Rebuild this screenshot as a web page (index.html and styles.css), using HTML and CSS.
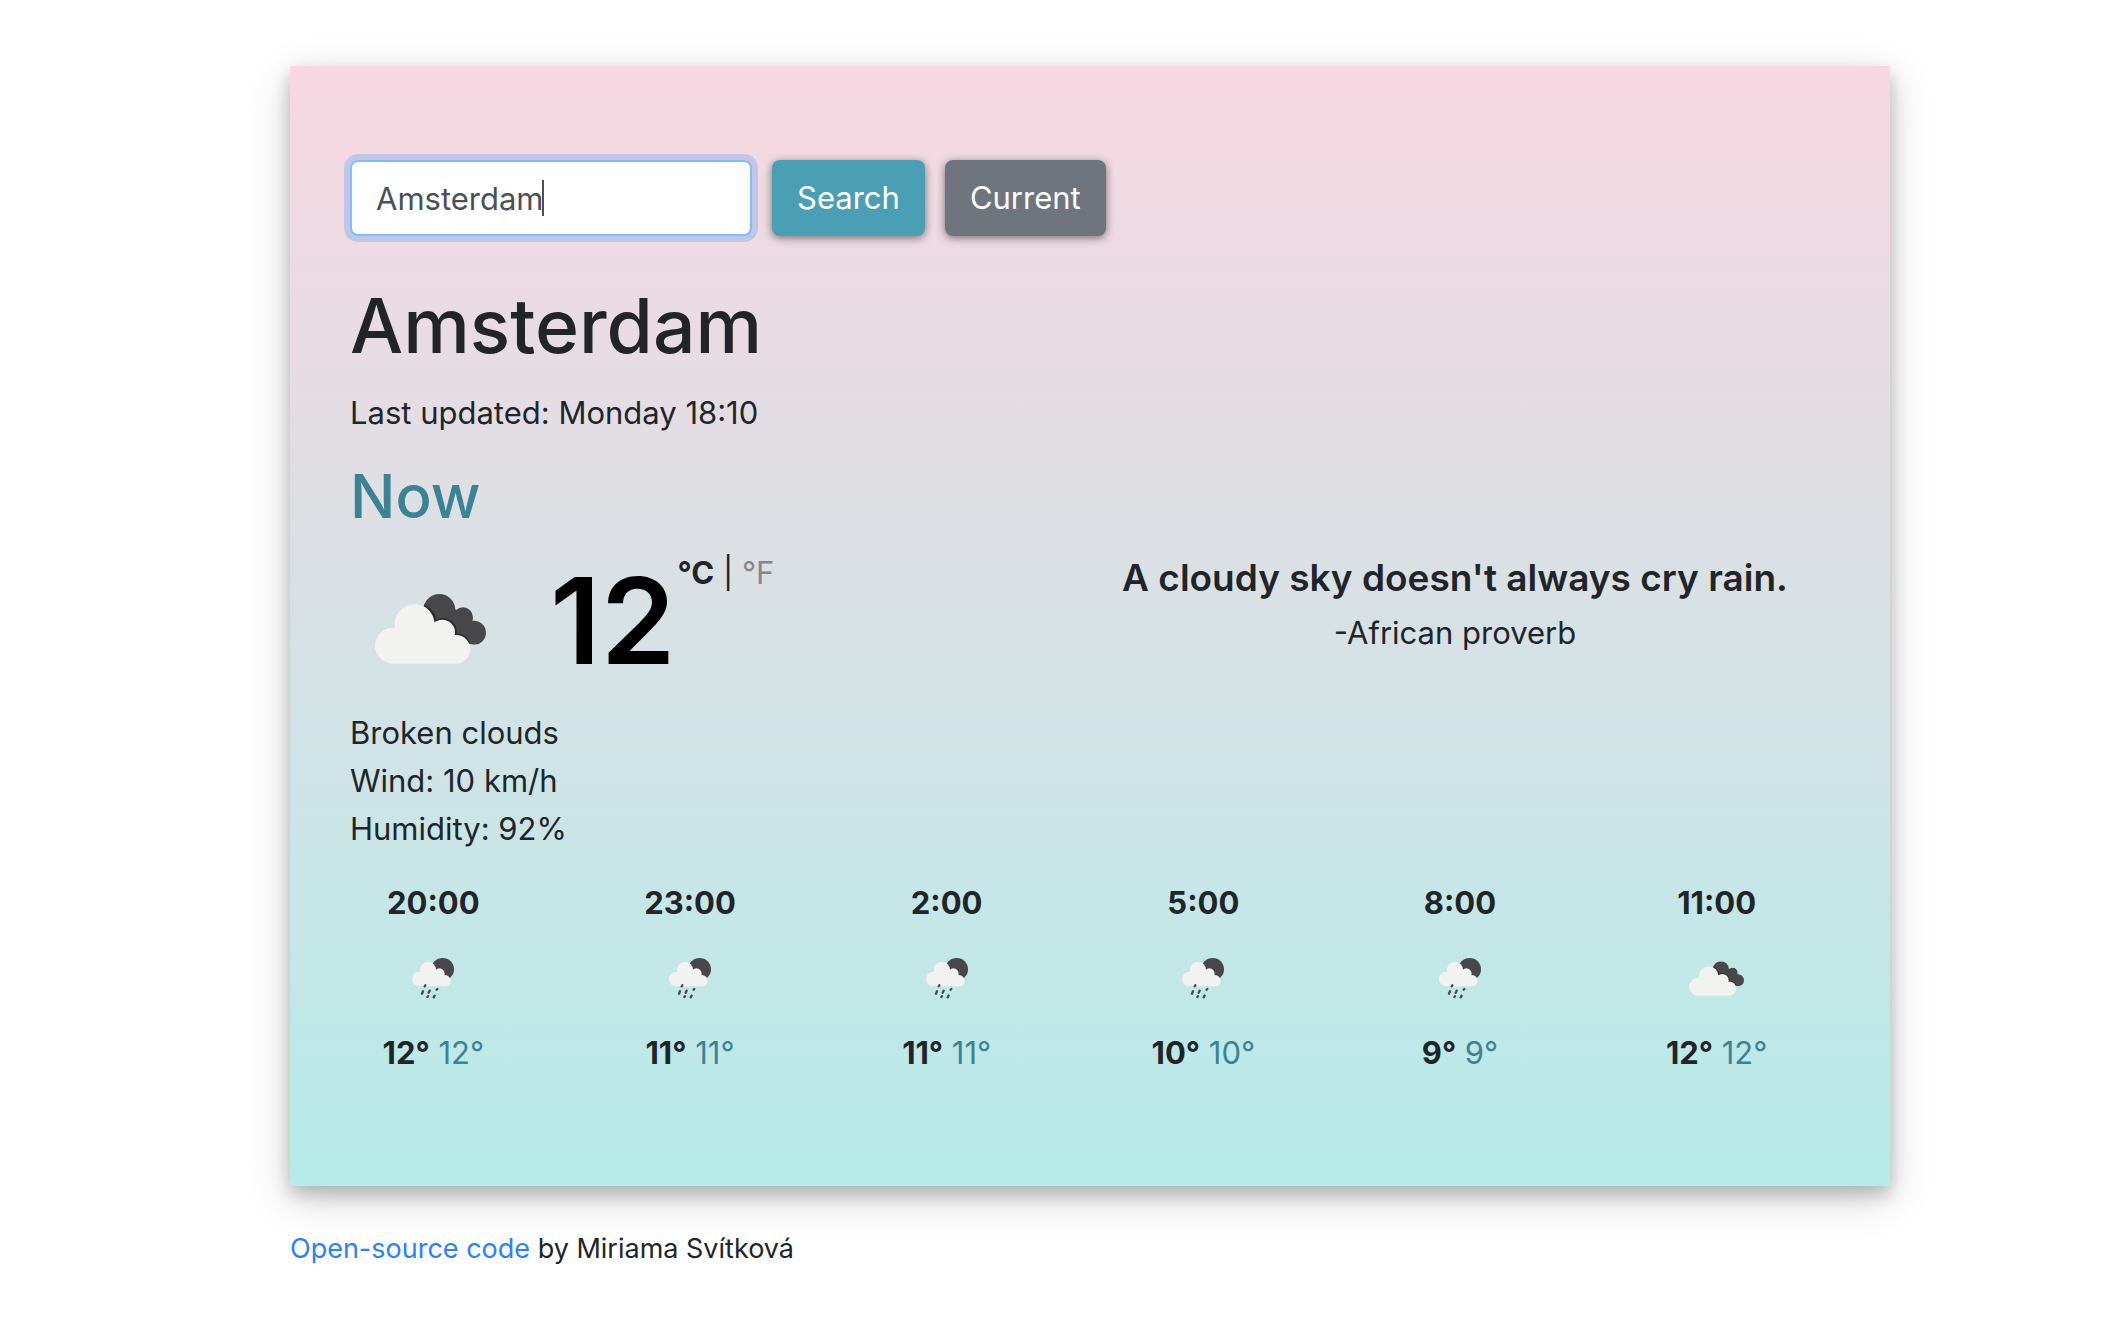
FILE: index.html
```html
<!DOCTYPE html>
<html lang="en">
<head>
<meta charset="utf-8">
<meta name="viewport" content="width=device-width, initial-scale=1">
<title>Weather</title>
<link rel="stylesheet" href="styles.css">
</head>
<body>
<svg class="sprite" aria-hidden="true">
  <clipPath id="back-cloud">
    <circle cx="193" cy="48" r="48"/><circle cx="264" cy="70" r="30"/><circle cx="297" cy="116" r="36"/>
    <path d="M160 50 240 45 290 90 290 150 200 130Z"/>
  </clipPath>
  <symbol id="clouds" viewBox="0 0 333 210">
    <g clip-path="url(#back-cloud)">
      <path d="M100 0H333V210H100Z" fill="#48484a"/>
      <g fill="#2b2b2d">
        <circle cx="121" cy="89" r="64"/><circle cx="204" cy="113" r="41"/><circle cx="243" cy="164" r="46"/>
      </g>
    </g>
    <g fill="#f2f2f0">
      <circle cx="54" cy="155" r="54"/><circle cx="119" cy="91" r="60"/><circle cx="202" cy="115" r="38"/><circle cx="243" cy="166" r="43"/>
      <path d="M54 209V110L119 80 202 90 240 140V209Z"/>
    </g>
  </symbol>
  <symbol id="rain" viewBox="0 0 126 123">
    <circle cx="92" cy="34" r="34" fill="#48484a"/>
    <g fill="#f2f2f2">
      <circle cx="22" cy="63" r="22"/><circle cx="48" cy="36" r="24"/><circle cx="82" cy="47" r="16"/><circle cx="99" cy="68" r="17"/>
      <path d="M22 85V45L48 30 82 40 99 60V85Z"/>
    </g>
    <g stroke="#48484a" stroke-width="7" stroke-linecap="round">
      <path d="M38 85 40 82M30 107 33 100M50 104 53 98M74 95 76 93M46 117 48 115M65 118 68 113"/>
    </g>
  </symbol>
</svg>

<div class="page">
  <main class="card">
    <form class="search">
      <div class="city-field">
        <input class="city-input" type="text" value="Amsterdam" aria-label="City" autocomplete="off" spellcheck="false" autofocus>
        <span class="caret"></span>
      </div>
      <button class="btn btn-search" type="submit">Search</button>
      <button class="btn btn-current" type="button">Current</button>
    </form>

    <h1 class="city">Amsterdam</h1>
    <p class="updated">Last updated: Monday 18:10</p>
    <h2 class="now">Now</h2>

    <div class="overview">
      <div class="temperature">
        <svg class="icon-now" role="img" aria-label="Broken clouds"><use href="#clouds"/></svg>
        <strong class="degrees">12</strong>
        <span class="units"><a class="unit active" href="#c">°C</a> | <a class="unit" href="#f">°F</a></span>
      </div>
      <div class="quote">
        <p class="quote-text">A cloudy sky doesn't always cry rain.</p>
        <p class="quote-author">-African proverb</p>
      </div>
    </div>

    <ul class="details">
      <li>Broken clouds</li>
      <li>Wind: 10 km/h</li>
      <li>Humidity: 92%</li>
    </ul>

    <div class="forecast">
      <div class="slot"><strong>20:00</strong><svg class="icon-rain"><use href="#rain"/></svg><span><strong>12°</strong> <span class="low">12°</span></span></div>
      <div class="slot"><strong>23:00</strong><svg class="icon-rain"><use href="#rain"/></svg><span><strong>11°</strong> <span class="low">11°</span></span></div>
      <div class="slot"><strong>2:00</strong><svg class="icon-rain"><use href="#rain"/></svg><span><strong>11°</strong> <span class="low">11°</span></span></div>
      <div class="slot"><strong>5:00</strong><svg class="icon-rain"><use href="#rain"/></svg><span><strong>10°</strong> <span class="low">10°</span></span></div>
      <div class="slot"><strong>8:00</strong><svg class="icon-rain"><use href="#rain"/></svg><span><strong>9°</strong> <span class="low">9°</span></span></div>
      <div class="slot"><strong>11:00</strong><svg class="icon-clouds"><use href="#clouds"/></svg><span><strong>12°</strong> <span class="low">12°</span></span></div>
    </div>
  </main>

  <footer class="footer"><a href="#source">Open-source code</a> by Miriama Svítková</footer>
</div>
</body>
</html>
```
FILE: styles.css
```css
* { box-sizing: border-box; }

body {
  margin: 0;
  padding: 66px 220px 56px 290px;
  background: #fff;
  color: #212529;
  font: 400 31px/48px Inter, "Liberation Sans", sans-serif;
}

h1, h2, p, ul { margin: 0; padding: 0; }
strong { font-weight: 700; }
a { text-decoration: none; }

.sprite { position: absolute; width: 0; height: 0; }

.page { max-width: 1600px; }

.card {
  padding: 94px 60px 109px;
  background: linear-gradient(#f8d7e1, #b5ebe8);
  box-shadow: 0 8px 16px rgba(0, 0, 0, .2), 0 12px 40px rgba(0, 0, 0, .19);
}

.search { display: flex; gap: 20px; }

.city-field { position: relative; width: 402px; }
.city-input {
  display: block;
  width: 100%;
  height: 76px;
  padding: 12px 24px;
  border: 2px solid #80bdff;
  border-radius: 8px;
  outline: 0;
  background: #fff;
  color: #495057;
  caret-color: transparent;
  font: inherit;
  box-shadow: 0 0 0 6px rgba(0, 123, 255, .2);
}
.caret {
  position: absolute;
  top: 20px;
  left: 192px;
  width: 2px;
  height: 36px;
  background: #495057;
}

.btn {
  height: 76px;
  padding: 0 25px;
  border: 0;
  border-radius: 8px;
  color: #fff;
  font: inherit;
  box-shadow: 0 2px 8px rgba(0, 0, 0, .5);
}
.btn-search { background: #4a9fb5; }
.btn-current { background: #6e757d; }

.city { margin-top: 42px; font-size: 75px; line-height: 96px; font-weight: 500; }
.updated { margin-top: 15px; }
.now { margin-top: 22px; font-size: 60px; line-height: 74px; font-weight: 500; color: #3b8294; }

.overview { display: grid; grid-template-columns: 1fr 1fr; min-height: 160px; margin-top: 16px; }

.temperature { display: flex; align-items: flex-start; padding-left: 25px; }
.icon-now { width: 111px; height: 70px; margin: 45px 64px 0 0; }
.degrees { margin: 12px 2px 0 0; font-size: 120px; line-height: 120px; font-weight: 600; color: #000; }
.unit { color: #868686; }
.unit.active { color: inherit; font-weight: 700; }

.quote { padding: 5px 10px 0 0; text-align: center; }
.quote-text { font-size: 37px; font-weight: 600; }
.quote-author { margin-top: 7px; }

.details { list-style: none; }

.forecast { display: grid; grid-template-columns: repeat(6, 1fr); margin: 26px -15px 0 -45px; }
.slot { display: grid; grid-template-rows: 48px 102px 48px; place-items: center; }
.icon-rain { width: 42px; height: 41px; }
.icon-clouds { width: 55px; height: 35px; }
.low { color: #3b8294; }

.footer { margin-top: 42px; font-size: 27px; line-height: 42px; }
.footer a { color: #2a7fff; }
```
